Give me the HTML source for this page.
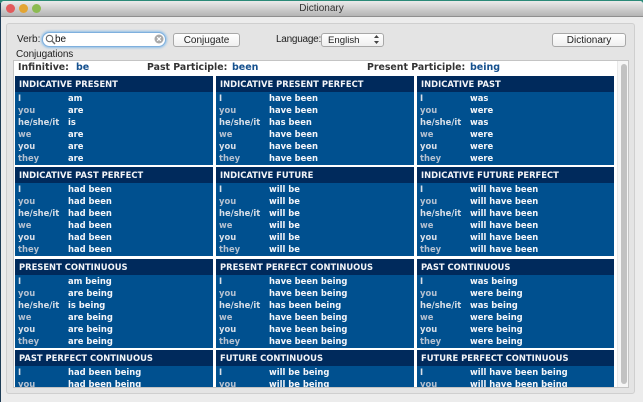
<!DOCTYPE html>
<html><head><meta charset="utf-8">
<style>
html,body{margin:0;padding:0;width:643px;height:402px;overflow:hidden}
body{position:relative;background:#1d3b55;font-family:"Liberation Sans",sans-serif}
.a{position:absolute;white-space:nowrap}
#topg{left:0;top:0;width:643px;height:3px;background:#2b8a78}
#title{left:1px;top:1px;width:642px;height:15px;background:linear-gradient(#ebebeb,#b4b4b4);border-bottom:1px solid #8f8f8f;border-radius:3px 3px 0 0}
.tl{width:9px;height:9px;border-radius:50%;top:4px;box-sizing:content-box}
.ui{font-size:10px;color:#222}
#group{left:6px;top:23px;width:627px;height:369px;background:#e4e4e4;border:1px solid #cfcfcf;border-radius:3px}
#panel{left:13px;top:60px;width:614px;height:326px;background:#fff;border:1px solid #c4c4c4;overflow:hidden}
.btn{height:12px;background:linear-gradient(#fff,#efefef);border:1px solid #a8a8a8;border-radius:3px;font-size:10px;color:#222;text-align:center;line-height:13px}
.h{position:absolute;background:#002a5c;color:#f2f4f8;font:bold 8.4px/16px "DejaVu Sans",sans-serif;height:16px;padding-left:4px;white-space:nowrap;overflow:hidden;box-sizing:border-box}
.b{position:absolute;background:#00508f;height:73px;overflow:hidden}
.b.s{height:21px}
.r{position:absolute;left:3px;right:0;height:12px;font:bold 8.4px/12px "DejaVu Sans",sans-serif;white-space:nowrap}
.r i{font-style:normal;color:#d8dfe8;position:absolute;left:0}
.r b{color:#f4f6fa;position:absolute;left:50px}
.r:nth-child(even) i{color:#b4c1d1}
.l{font:bold 9.4px/12px "DejaVu Sans",sans-serif;color:#333;position:absolute;white-space:nowrap}
.v{font:bold 9.5px/12px "DejaVu Sans",sans-serif;color:#15508e;position:absolute;white-space:nowrap}
</style></head><body>
<div class="a" id="topg"></div>
<div class="a" style="left:1px;top:1px;width:642px;height:401px;background:#ececec;border-radius:3px 3px 0 0"></div>
<div class="a" id="title"></div>
<div class="a tl" style="left:6px;background:#e25a5c"></div>
<div class="a tl" style="left:19px;background:#e3a533"></div>
<div class="a tl" style="left:32px;background:#8cbb52"></div>
<div class="a" style="left:0;top:3px;width:643px;text-align:center;font-size:10px;line-height:12px;color:#333">Dictionary</div>
<div class="a" id="group"></div>

<div class="a ui" style="left:17px;top:34px;line-height:12px">Verb:</div>
<div class="a" style="left:42px;top:32px;width:122px;height:13px;background:#fff;border:1px solid #7fb0de;border-radius:8px;box-shadow:0 0 2px 1px #8fbfe8"></div>
<svg class="a" style="left:45px;top:34px" width="11" height="11" viewBox="0 0 11 11"><circle cx="4.5" cy="4.5" r="3.2" fill="none" stroke="#666" stroke-width="1.1"/><path d="M7 7l3 3" stroke="#666" stroke-width="1.4"/></svg>
<div class="a ui" style="left:55px;top:34px;line-height:12px;color:#111">be</div>
<svg class="a" style="left:154px;top:34px" width="11" height="11" viewBox="0 0 11 11"><circle cx="5" cy="5" r="4.5" fill="#a9a9a9"/><path d="M3.2 3.2l3.6 3.6M6.8 3.2l-3.6 3.6" stroke="#fff" stroke-width="1.2"/></svg>
<div class="a btn" style="left:173px;top:33px;width:65px">Conjugate</div>
<div class="a ui" style="left:276px;top:34px;line-height:12px;letter-spacing:-.25px">Language:</div>
<div class="a btn" style="left:321px;top:33px;width:61px;text-align:left;text-indent:6px;font-size:9.6px">English</div>
<svg class="a" style="left:373px;top:34px" width="7" height="11" viewBox="0 0 7 11"><path d="M1 4l2.5-3 2.5 3zM1 7l2.5 3 2.5-3z" fill="#444"/></svg>
<div class="a btn" style="left:552px;top:33px;width:72px">Dictionary</div>
<div class="a ui" style="left:16px;top:49px;line-height:12px;letter-spacing:-.1px">Conjugations</div>

<div class="a" id="panel">
<div class="l" style="left:4px;top:1px">Infinitive:</div><div class="v" style="left:62px;top:1px">be</div>
<div class="l" style="left:133px;top:1px">Past Participle:</div><div class="v" style="left:218px;top:1px">been</div>
<div class="l" style="left:353px;top:1px">Present Participle:</div><div class="v" style="left:456px;top:1px">being</div>

<div class="a" style="left:603px;top:0;width:10px;height:326px;background:#f6f6f6;border-left:1px solid #e8e8e8"></div>
<div class="a" style="left:607px;top:3px;width:6px;height:320px;background:#c2c2c2;border-radius:3px"></div>

<div class="h" style="left:1px;top:15px;width:198px">INDICATIVE PRESENT</div>
<div class="b" style="left:1px;top:31px;width:198px"><div class="r" style="top:0"><i>I</i><b>am</b></div><div class="r" style="top:12px"><i>you</i><b>are</b></div><div class="r" style="top:24px"><i>he/she/it</i><b>is</b></div><div class="r" style="top:36px"><i>we</i><b>are</b></div><div class="r" style="top:48px"><i>you</i><b>are</b></div><div class="r" style="top:60px"><i>they</i><b>are</b></div></div>
<div class="h" style="left:202px;top:15px;width:198px">INDICATIVE PRESENT PERFECT</div>
<div class="b" style="left:202px;top:31px;width:198px"><div class="r" style="top:0"><i>I</i><b>have been</b></div><div class="r" style="top:12px"><i>you</i><b>have been</b></div><div class="r" style="top:24px"><i>he/she/it</i><b>has been</b></div><div class="r" style="top:36px"><i>we</i><b>have been</b></div><div class="r" style="top:48px"><i>you</i><b>have been</b></div><div class="r" style="top:60px"><i>they</i><b>have been</b></div></div>
<div class="h" style="left:403px;top:15px;width:197px">INDICATIVE PAST</div>
<div class="b" style="left:403px;top:31px;width:197px"><div class="r" style="top:0"><i>I</i><b>was</b></div><div class="r" style="top:12px"><i>you</i><b>were</b></div><div class="r" style="top:24px"><i>he/she/it</i><b>was</b></div><div class="r" style="top:36px"><i>we</i><b>were</b></div><div class="r" style="top:48px"><i>you</i><b>were</b></div><div class="r" style="top:60px"><i>they</i><b>were</b></div></div>

<div class="h" style="left:1px;top:106px;width:198px">INDICATIVE PAST PERFECT</div>
<div class="b" style="left:1px;top:122px;width:198px"><div class="r" style="top:0"><i>I</i><b>had been</b></div><div class="r" style="top:12px"><i>you</i><b>had been</b></div><div class="r" style="top:24px"><i>he/she/it</i><b>had been</b></div><div class="r" style="top:36px"><i>we</i><b>had been</b></div><div class="r" style="top:48px"><i>you</i><b>had been</b></div><div class="r" style="top:60px"><i>they</i><b>had been</b></div></div>
<div class="h" style="left:202px;top:106px;width:198px">INDICATIVE FUTURE</div>
<div class="b" style="left:202px;top:122px;width:198px"><div class="r" style="top:0"><i>I</i><b>will be</b></div><div class="r" style="top:12px"><i>you</i><b>will be</b></div><div class="r" style="top:24px"><i>he/she/it</i><b>will be</b></div><div class="r" style="top:36px"><i>we</i><b>will be</b></div><div class="r" style="top:48px"><i>you</i><b>will be</b></div><div class="r" style="top:60px"><i>they</i><b>will be</b></div></div>
<div class="h" style="left:403px;top:106px;width:197px">INDICATIVE FUTURE PERFECT</div>
<div class="b" style="left:403px;top:122px;width:197px"><div class="r" style="top:0"><i>I</i><b>will have been</b></div><div class="r" style="top:12px"><i>you</i><b>will have been</b></div><div class="r" style="top:24px"><i>he/she/it</i><b>will have been</b></div><div class="r" style="top:36px"><i>we</i><b>will have been</b></div><div class="r" style="top:48px"><i>you</i><b>will have been</b></div><div class="r" style="top:60px"><i>they</i><b>will have been</b></div></div>

<div class="h" style="left:1px;top:198px;width:198px">PRESENT CONTINUOUS</div>
<div class="b" style="left:1px;top:214px;width:198px"><div class="r" style="top:0"><i>I</i><b>am being</b></div><div class="r" style="top:12px"><i>you</i><b>are being</b></div><div class="r" style="top:24px"><i>he/she/it</i><b>is being</b></div><div class="r" style="top:36px"><i>we</i><b>are being</b></div><div class="r" style="top:48px"><i>you</i><b>are being</b></div><div class="r" style="top:60px"><i>they</i><b>are being</b></div></div>
<div class="h" style="left:202px;top:198px;width:198px">PRESENT PERFECT CONTINUOUS</div>
<div class="b" style="left:202px;top:214px;width:198px"><div class="r" style="top:0"><i>I</i><b>have been being</b></div><div class="r" style="top:12px"><i>you</i><b>have been being</b></div><div class="r" style="top:24px"><i>he/she/it</i><b>has been being</b></div><div class="r" style="top:36px"><i>we</i><b>have been being</b></div><div class="r" style="top:48px"><i>you</i><b>have been being</b></div><div class="r" style="top:60px"><i>they</i><b>have been being</b></div></div>
<div class="h" style="left:403px;top:198px;width:197px">PAST CONTINUOUS</div>
<div class="b" style="left:403px;top:214px;width:197px"><div class="r" style="top:0"><i>I</i><b>was being</b></div><div class="r" style="top:12px"><i>you</i><b>were being</b></div><div class="r" style="top:24px"><i>he/she/it</i><b>was being</b></div><div class="r" style="top:36px"><i>we</i><b>were being</b></div><div class="r" style="top:48px"><i>you</i><b>were being</b></div><div class="r" style="top:60px"><i>they</i><b>were being</b></div></div>

<div class="h" style="left:1px;top:289px;width:198px">PAST PERFECT CONTINUOUS</div>
<div class="b s" style="left:1px;top:305px;width:198px"><div class="r" style="top:0"><i>I</i><b>had been being</b></div><div class="r" style="top:12px"><i>you</i><b>had been being</b></div></div>
<div class="h" style="left:202px;top:289px;width:198px">FUTURE CONTINUOUS</div>
<div class="b s" style="left:202px;top:305px;width:198px"><div class="r" style="top:0"><i>I</i><b>will be being</b></div><div class="r" style="top:12px"><i>you</i><b>will be being</b></div></div>
<div class="h" style="left:403px;top:289px;width:197px">FUTURE PERFECT CONTINUOUS</div>
<div class="b s" style="left:403px;top:305px;width:197px"><div class="r" style="top:0"><i>I</i><b>will have been being</b></div><div class="r" style="top:12px"><i>you</i><b>will have been being</b></div></div>
</div>
</body></html>
